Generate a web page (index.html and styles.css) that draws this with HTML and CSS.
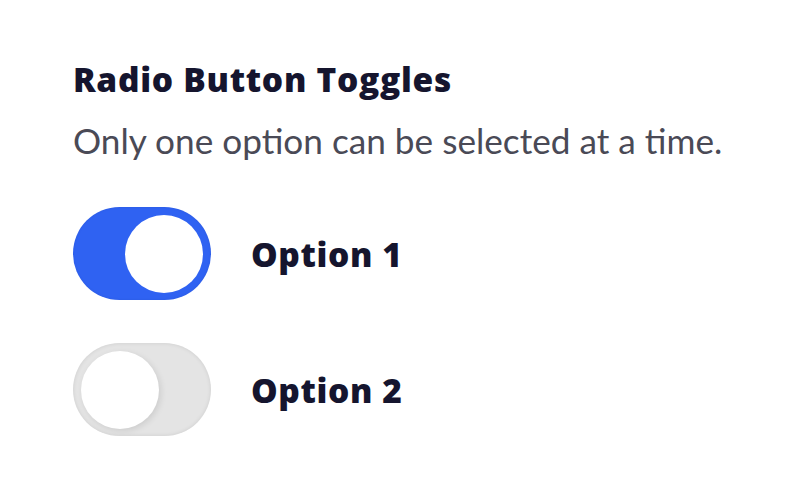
FILE: index.html
```html
<!DOCTYPE html>
<html>
<head>
<meta charset="utf-8">
<link rel="stylesheet" href="styles.css">
</head>
<body>
<main class="panel">
  <h1 class="title">Radio Button Toggles</h1>
  <p class="subtitle">Only one option can be selected at a time.</p>
  <div class="options">
    <label class="option">
      <span class="toggle toggle--on"><span class="knob"></span></span>
      <span class="option-label">Option 1</span>
    </label>
    <label class="option">
      <span class="toggle"><span class="knob"></span></span>
      <span class="option-label">Option 2</span>
    </label>
  </div>
</main>
</body>
</html>
```

FILE: styles.css
```css
html, body {
  margin: 0;
  padding: 0;
  background: #ffffff;
}
body {
  font-family: Lato, "Noto Sans", sans-serif;
  color: #15152e;
}
.panel {
  padding: 59px 0 0 73px;
  display: flex;
  flex-direction: column;
}
.title {
  margin: 0;
  font-family: "Open Sans", Lato, sans-serif;
  font-size: 33.5px;
  font-weight: 800;
  line-height: 40px;
  letter-spacing: 0.7px;
  color: #15152e;
}
.subtitle {
  margin: 21px 0 0 0;
  font-size: 35.2px;
  font-weight: 400;
  line-height: 40px;
  color: #4a4a56;
}
.options {
  margin-top: 47px;
  display: flex;
  flex-direction: column;
  gap: 43px;
}
.option {
  display: flex;
  align-items: center;
  gap: 40px;
}
.toggle {
  box-sizing: border-box;
  width: 138px;
  height: 93px;
  border-radius: 47px;
  background: #2f62f2;
  padding: 8px;
  display: flex;
  align-items: center;
  justify-content: flex-end;
  box-shadow: inset 0 0 3px rgba(0,0,0,0.08);
}
.toggle:not(.toggle--on) {
  background: #e4e4e4;
  justify-content: flex-start;
  box-shadow: inset 0 0 4px rgba(0,0,0,0.10);
}
.knob {
  width: 78px;
  height: 78px;
  border-radius: 50%;
  background: #ffffff;
}
.toggle:not(.toggle--on) .knob {
  box-shadow: 2px 2px 6px rgba(0,0,0,0.10);
}
.option-label {
  font-family: "Open Sans", Lato, sans-serif;
  font-size: 33.5px;
  font-weight: 800;
  letter-spacing: 0.6px;
  color: #15152e;
}
```
